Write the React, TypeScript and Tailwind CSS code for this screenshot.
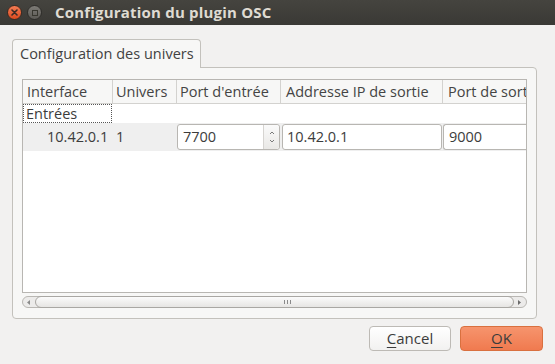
import { FC } from 'react';

const font = { fontFamily: '"Open Sans", "Noto Sans", sans-serif' };

const SpinArrows: FC = () => (
    <div className="w-[16px] h-full flex flex-col items-center justify-center border-l border-[#d6d4d1] bg-gradient-to-b from-[#fafafa] to-[#e9e8e6] rounded-r-[3px]">
        <svg width="6" height="18" viewBox="0 0 6 18">
            <path d="M1 6 L3 4 L5 6" fill="none" stroke="#7a7a7a" strokeWidth="1" />
            <path d="M1 12 L3 14 L5 12" fill="none" stroke="#7a7a7a" strokeWidth="1" />
        </svg>
    </div>
);

const TitleBar: FC = () => (
    <div className="h-[25px] flex items-center bg-gradient-to-b from-[#45443f] to-[#3a3935] px-[7px] gap-[5px]">
        <div className="w-[15px] h-[15px] rounded-full bg-gradient-to-b from-[#f47b52] to-[#dc4a1e] border border-[#3a2a22] flex items-center justify-center">
            <svg width="7" height="7" viewBox="0 0 7 7">
                <path d="M1 1 L6 6 M6 1 L1 6" stroke="#3b2b25" strokeWidth="1.6" strokeLinecap="round" />
            </svg>
        </div>
        <div className="w-[15px] h-[15px] rounded-full bg-gradient-to-b from-[#7d7b76] to-[#5c5a55] border border-[#2e2d2a] flex items-center justify-center">
            <div className="w-[6px] h-[6px] border border-[#38372f]" />
        </div>
        <span className="ml-[8px] text-[15px] font-bold text-[#dfdbd2] tracking-[0.2px]">Configuration du plugin OSC</span>
    </div>
);

export default function App() {
    return (
        <div className="w-[555px] h-[364px] bg-[#f2f1f0] text-[#3c3c3c] text-[14.5px] overflow-hidden" style={font}>
            <TitleBar />
            <div className="pl-[12px] pr-[18px] pt-[14px]">
                <div className="relative z-10 w-[189px] h-[29px] border border-b-0 border-[#c3c1bc] rounded-t-[4px] bg-[#f7f7f6] flex items-center pl-[7px] text-[14.5px] text-[#424242] whitespace-nowrap">
                    Configuration des univers
                </div>
                <div className="-mt-px h-[252px] border border-[#c3c1bc] rounded-b-[4px] rounded-tr-[4px] bg-[#f7f7f6] px-[9px] pt-[11px]">
                    <div className="h-[214px] border border-[#b8b6b2] bg-white flex flex-col">
                        <div className="h-[24px] flex border-b border-[#d3d2cf] bg-[#f7f7f6] text-[#444] whitespace-nowrap">
                            <div className="w-[90px] pl-[4px] flex items-center border-r border-[#d3d2cf]">Interface</div>
                            <div className="w-[64px] pl-[3px] flex items-center border-r border-[#d3d2cf]">Univers</div>
                            <div className="w-[104px] pl-[3px] flex items-center border-r border-[#d3d2cf]">Port d'entrée</div>
                            <div className="w-[162px] pl-[5px] flex items-center border-r border-[#d3d2cf]">Addresse IP de sortie</div>
                            <div className="flex-1 pl-[5px] flex items-center overflow-hidden">Port de sortie</div>
                        </div>
                        <div className="h-[19px] flex">
                            <div className="w-[89px] pl-[2px] flex items-center border border-dotted border-[#555]">Entrées</div>
                        </div>
                        <div className="h-[28px] flex items-center bg-[#efefef]">
                            <div className="w-[90px] pl-[24px]">10.42.0.1</div>
                            <div className="w-[64px] pl-[3px]">1</div>
                            <div className="w-[103px] h-[26px] flex border border-[#b8b6b2] rounded-[3px] bg-white">
                                <div className="flex-1 flex items-center pl-[5px]">7700</div>
                                <SpinArrows />
                            </div>
                            <div className="w-[160px] h-[26px] ml-[2px] flex items-center pl-[4px] border border-[#b8b6b2] rounded-[3px] bg-white">10.42.0.1</div>
                            <div className="flex-1 h-[26px] ml-px flex items-center pl-[5px] border border-[#b8b6b2] border-r-0 rounded-l-[3px] bg-white">9000</div>
                        </div>
                    </div>
                    <div className="mt-[3px] h-[12px] flex items-center rounded-[6px] border border-[#b9b7b3] bg-[#ecebea]">
                        <div className="w-[12px] flex items-center justify-center">
                            <svg width="4" height="5" viewBox="0 0 4 5"><path d="M3 0 L0 2.5 L3 5 Z" fill="#8a8a8a" /></svg>
                        </div>
                        <div className="flex-1 h-[12px] -my-px rounded-[6px] border border-[#a9a7a3] bg-gradient-to-b from-[#fbfbfb] to-[#e6e5e3] flex items-center justify-end pr-[222px]">
                            <svg width="7" height="4" viewBox="0 0 7 4"><path d="M0.5 0 V4 M3.5 0 V4 M6.5 0 V4" stroke="#8a8a8a" strokeWidth="1" /></svg>
                        </div>
                        <div className="w-[12px] flex items-center justify-center">
                            <svg width="4" height="5" viewBox="0 0 4 5"><path d="M0 0 L3 2.5 L0 5 Z" fill="#6a6a6a" /></svg>
                        </div>
                    </div>
                </div>
            </div>
            <div className="flex justify-end gap-[9px] pr-[12px] mt-[7px]">
                <button className="w-[82px] h-[25px] rounded-[4px] border border-[#bdbab5] bg-gradient-to-b from-[#ffffff] to-[#f2f1f0] text-[15px] text-[#3c3c3c]">
                    <span className="underline underline-offset-[3px]">C</span>ancel
                </button>
                <button className="w-[83px] h-[25px] rounded-[4px] border border-[#d9703f] bg-gradient-to-b from-[#f6946d] to-[#f07a4f] text-[15px] text-[#3c3c3c]">
                    <span className="underline underline-offset-[3px]">O</span>K
                </button>
            </div>
        </div>
    );
}
